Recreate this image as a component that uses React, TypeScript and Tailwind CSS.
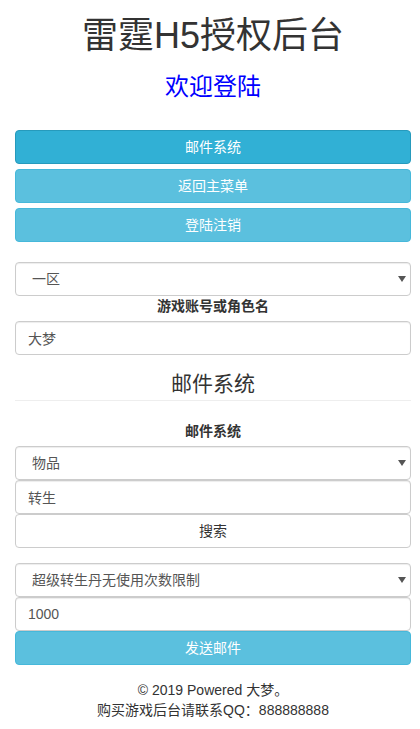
import type { ReactNode } from "react";

const font = "font-['Liberation_Sans','Noto_Sans_CJK_SC',sans-serif]";

function InfoButton({ children, active = false }: { children: ReactNode; active?: boolean }) {
  return (
    <button
      type="button"
      className={
        "block h-[34px] w-full rounded-[4px] border text-[14px] leading-[20px] text-white " +
        (active ? "border-[#269abc] bg-[#31b0d5]" : "border-[#46b8da] bg-[#5bc0de]")
      }
    >
      {children}
    </button>
  );
}

function Select({ value }: { value: string }) {
  return (
    <div className="relative">
      <select
        defaultValue={value}
        className="block h-[34px] w-full appearance-none rounded-[4px] border border-[#ccc] bg-white pl-[16px] pr-[24px] text-[14px] text-[#555] shadow-[inset_0_1px_1px_rgba(0,0,0,0.075)]"
      >
        <option>{value}</option>
      </select>
      <svg
        className="pointer-events-none absolute right-[5px] top-[14px]"
        width="8"
        height="6"
        viewBox="0 0 8 6"
      >
        <path d="M0 0h8L4 6z" fill="#555" />
      </svg>
    </div>
  );
}

function Input({ value }: { value: string }) {
  return (
    <input
      defaultValue={value}
      className="block h-[34px] w-full rounded-[4px] border border-[#ccc] bg-white px-[12px] text-[14px] text-[#555] shadow-[inset_0_1px_1px_rgba(0,0,0,0.075)]"
    />
  );
}

export default function App() {
  return (
    <div className={`${font} min-h-[729px] bg-white pl-[15px] pr-[9px] text-[14px] text-[#333]`}>
      <h1 className="pt-[16px] text-center text-[36px] leading-[40px]">雷霆H5授权后台</h1>
      <h3 className="mt-[18px] text-center text-[24px] leading-[26px] text-[#0000ff]">欢迎登陆</h3>

      <div className="mt-[30px] flex flex-col gap-[5px]">
        <InfoButton active>邮件系统</InfoButton>
        <InfoButton>返回主菜单</InfoButton>
        <InfoButton>登陆注销</InfoButton>
      </div>

      <div className="mt-[20px]">
        <Select value="一区" />
        <label className="mb-[5px] block text-center font-bold leading-[20px]">游戏账号或角色名</label>
        <Input value="大梦" />
      </div>

      <h3 className="mt-[17px] text-center text-[21px] leading-[23px]">邮件系统</h3>
      <hr className="mt-[5px] border-t border-[#eee]" />

      <label className="mt-[20px] mb-[5px] block text-center font-bold leading-[20px]">邮件系统</label>
      <Select value="物品" />
      <Input value="转生" />
      <button
        type="button"
        className="block h-[34px] w-full rounded-[4px] border border-[#ccc] bg-white text-[14px] text-[#333]"
      >
        搜索
      </button>

      <div className="mt-[15px]">
        <Select value="超级转生丹无使用次数限制" />
        <Input value="1000" />
        <InfoButton>发送邮件</InfoButton>
      </div>

      <footer className="mt-[15px] text-center leading-[20px]">
        <p>© 2019 Powered 大梦。</p>
        <p>购买游戏后台请联系QQ：888888888</p>
      </footer>
    </div>
  );
}
